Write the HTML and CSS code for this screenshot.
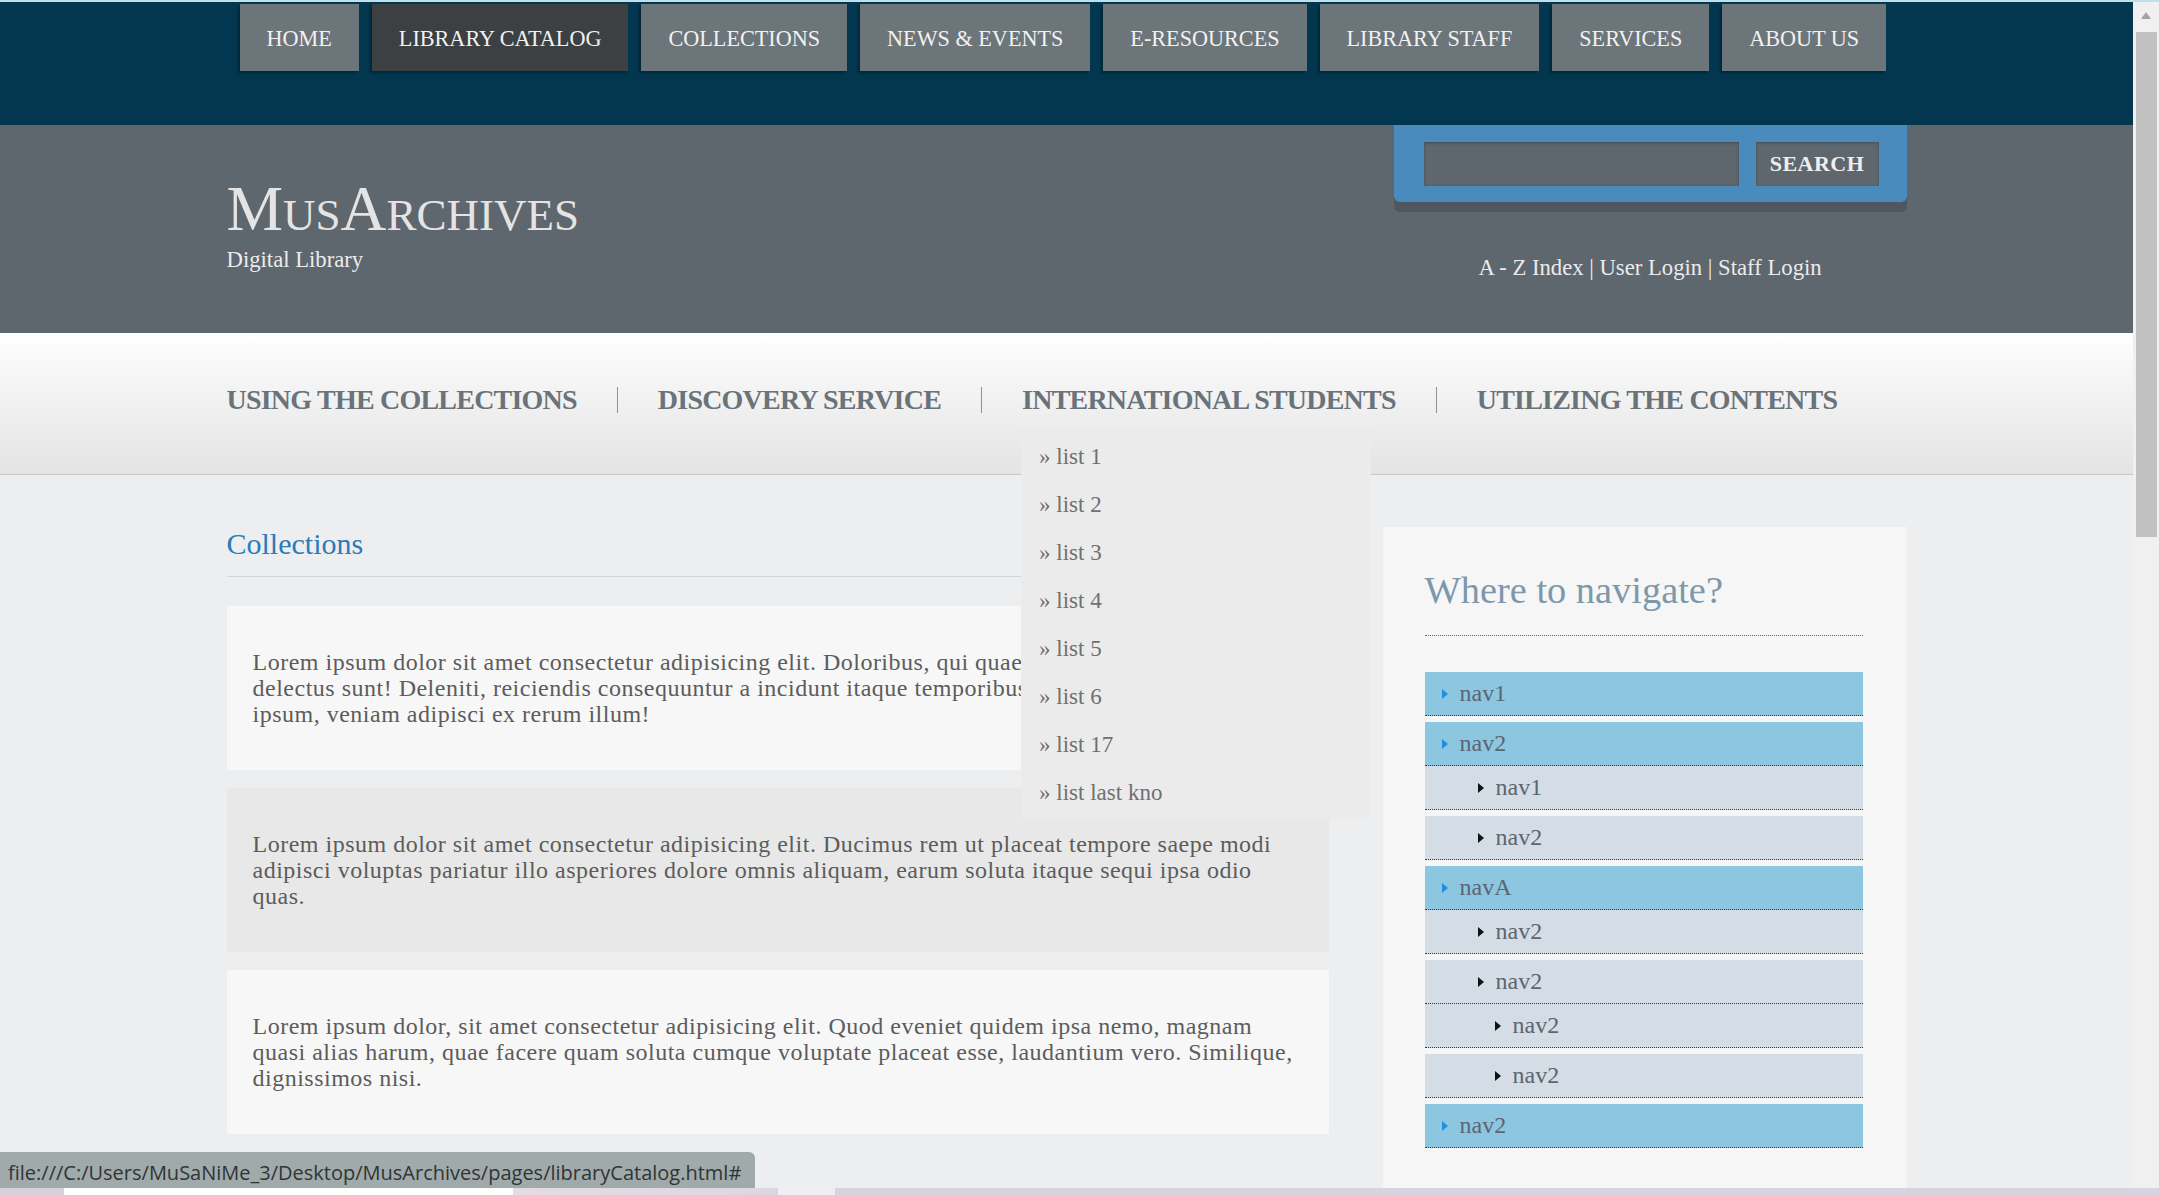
FILE: index.html
```html
<!DOCTYPE html>
<html lang="en">
<head>
<meta charset="utf-8">
<title>MusArchives - Library Catalog</title>
<link rel="stylesheet" href="styles.css">
</head>
<body>
<header class="topbar">
  <nav class="wrap mainnav">
    <a href="#" class="mn">HOME</a>
    <a href="#" class="mn active">LIBRARY CATALOG</a>
    <a href="#" class="mn">COLLECTIONS</a>
    <a href="#" class="mn">NEWS &amp; EVENTS</a>
    <a href="#" class="mn">E-RESOURCES</a>
    <a href="#" class="mn">LIBRARY STAFF</a>
    <a href="#" class="mn">SERVICES</a>
    <a href="#" class="mn">ABOUT US</a>
  </nav>
</header>

<section class="masthead">
  <div class="wrap mast-inner">
    <div class="brand">
      <h1 class="brand-title">MusArchives</h1>
      <p class="brand-sub">Digital Library</p>
    </div>
    <div class="tools">
      <form class="search">
        <input class="search-input" type="text" aria-label="Search">
        <button class="search-btn" type="button">SEARCH</button>
      </form>
      <div class="quick">A - Z Index | User Login | Staff Login</div>
    </div>
  </div>
</section>

<nav class="subnav">
  <ul class="wrap sublist">
    <li class="sub-item">USING THE COLLECTIONS</li>
    <li class="sub-item">DISCOVERY SERVICE</li>
    <li class="sub-item">INTERNATIONAL STUDENTS
      <ul class="drop">
        <li class="drop-item">» list 1</li>
        <li class="drop-item">» list 2</li>
        <li class="drop-item">» list 3</li>
        <li class="drop-item">» list 4</li>
        <li class="drop-item">» list 5</li>
        <li class="drop-item">» list 6</li>
        <li class="drop-item">» list 17</li>
        <li class="drop-item">» list last kno</li>
      </ul>
    </li>
    <li class="sub-item">UTILIZING THE CONTENTS</li>
  </ul>
</nav>

<main class="wrap content">
  <section class="col-main">
    <h2 class="section-title">Collections</h2>
    <article class="card"><p>Lorem ipsum dolor sit amet consectetur adipisicing elit. Doloribus, qui quaerat nostrum odio nihil delectus sunt! Deleniti, reiciendis consequuntur a incidunt itaque temporibus, aut quod nam nobis ipsum, veniam adipisci ex rerum illum!</p></article>
    <article class="card alt"><p>Lorem ipsum dolor sit amet consectetur adipisicing elit. Ducimus rem ut placeat tempore saepe modi adipisci voluptas pariatur illo asperiores dolore omnis aliquam, earum soluta itaque sequi ipsa odio quas.</p></article>
    <article class="card"><p>Lorem ipsum dolor, sit amet consectetur adipisicing elit. Quod eveniet quidem ipsa nemo, magnam quasi alias harum, quae facere quam soluta cumque voluptate placeat esse, laudantium vero. Similique, dignissimos nisi.</p></article>
  </section>

  <aside class="sidebar">
    <h3 class="side-title">Where to navigate?</h3>
    <ul class="snav">
      <li><a href="#">nav1</a></li>
      <li><a href="#">nav2</a>
        <ul>
          <li><a href="#">nav1</a></li>
          <li><a href="#">nav2</a></li>
        </ul>
      </li>
      <li><a href="#">navA</a>
        <ul>
          <li><a href="#">nav2</a></li>
          <li><a href="#">nav2</a>
            <ul>
              <li><a href="#">nav2</a></li>
              <li><a href="#">nav2</a></li>
            </ul>
          </li>
        </ul>
      </li>
      <li><a href="#">nav2</a></li>
    </ul>
  </aside>
</main>

<div class="statusbar">file:///C:/Users/MuSaNiMe_3/Desktop/MusArchives/pages/libraryCatalog.html#</div>
<div class="vscroll"><div class="vscroll-up"></div><div class="vscroll-thumb"></div></div>
<div class="frame-top"></div>
<div class="taskbar"></div>
</body>
</html>
```

FILE: styles.css
```css
* { box-sizing: border-box; }
html { overflow: hidden; }
body {
  margin: 0;
  padding-right: 26px;
  min-height: 1195px;
  background: #eceef0;
  font-family: "Liberation Serif", "Times New Roman", serif;
  color: #5c5c5c;
}
.wrap { width: 1680px; margin: 0 auto; }

/* top navigation */
.topbar { background: #03364f; height: 125px; padding-top: 4px; }
.mainnav { display: flex; gap: 13px; padding-left: 13px; }
.mn {
  display: block;
  height: 67px;
  padding: 2px 27px 0;
  line-height: 65px;
  background: #6c757a;
  color: #f1f1f1;
  font-size: 22.2px;
  text-decoration: none;
  box-shadow: -2px 2px 2px rgba(0, 0, 0, 0.3);
}
.mn.active { background: #3c4043; }

/* masthead */
.masthead { background: #5e666e; height: 208px; }
.mast-inner { display: flex; justify-content: space-between; align-items: flex-start; }
.brand { padding-top: 52px; }
.brand-title {
  margin: 0;
  font-size: 63.6px;
  line-height: 63px;
  font-weight: normal;
  font-variant: small-caps;
  color: #e4e4e4;
}
.brand-sub { margin: 7px 0 0; font-size: 22.7px; line-height: 26px; color: #ececec; }
.tools { width: 513px; }
.search {
  display: flex;
  gap: 17px;
  margin: 0;
  padding: 17px 28px 16px 30px;
  background: #4a8bbd;
  border-radius: 0 0 6px 6px;
  box-shadow: 0 10px 0 #4f575e;
}
.search-input {
  width: 315px;
  height: 44px;
  border: 0;
  background: #5e666e;
  box-shadow: inset 0 1px 3px rgba(0, 0, 0, 0.3);
}
.search-btn {
  width: 123px;
  height: 44px;
  border: 0;
  padding: 0;
  background: #5e666e;
  color: #eeeeee;
  font-family: "Liberation Serif", serif;
  font-weight: bold;
  font-size: 22px;
  letter-spacing: 0.5px;
  box-shadow: inset 0 1px 3px rgba(0, 0, 0, 0.25);
}
.quick { margin-top: 53px; text-align: center; font-size: 22.7px; line-height: 26px; color: #ebebeb; }

/* secondary navigation */
.subnav {
  background: linear-gradient(#ffffff 0%, #f7f7f7 25%, #e4e4e4 100%);
  border-bottom: 1px solid #c6c8ca;
  padding: 54px 0 61px;
}
.sublist { display: flex; list-style: none; padding: 0; margin-top: 0; margin-bottom: 0; }
.sub-item {
  position: relative;
  padding: 0 40px;
  line-height: 26px;
  font-size: 28px;
  font-weight: bold;
  letter-spacing: -0.78px;
  color: #6a737a;
}
.sub-item:first-child { padding-left: 0; }
.sub-item + .sub-item { border-left: 1px solid #8b9197; }
.drop {
  position: absolute;
  top: 41px;
  left: 39px;
  width: 350px;
  margin: 0;
  padding: 5px 0 2px;
  list-style: none;
  background: #ebebeb;
  z-index: 5;
}
.drop-item {
  padding-left: 18px;
  line-height: 48px;
  font-size: 23px;
  font-weight: normal;
  letter-spacing: 0;
  color: #707070;
}

/* content */
.content { display: flex; gap: 54px; align-items: flex-start; }
.col-main { width: 1102px; padding-top: 51px; }
.section-title {
  margin: 0 0 29px;
  padding-bottom: 14px;
  border-bottom: 1px solid #d4d7da;
  font-size: 30px;
  line-height: 36px;
  font-weight: normal;
  color: #2b7bb9;
}
.card {
  margin-bottom: 18px;
  padding: 43px 26px;
  background: #f7f7f7;
  font-size: 24px;
  line-height: 26px;
  letter-spacing: 0.5px;
  color: #5c5c5c;
}
.card p { margin: 0; }
.card.alt { background: #e8e8e8; }

/* sidebar */
.sidebar {
  width: 524px;
  margin-top: 52px;
  padding: 41px 44px 60px 42px;
  background: #f6f6f6;
}
.side-title {
  margin: 0;
  padding-bottom: 23px;
  border-bottom: 1px dotted #666;
  font-size: 38.4px;
  line-height: 44px;
  font-weight: normal;
  color: #7e98ab;
}
.snav { list-style: none; margin: 36px 0 0; padding: 0; }
.snav ul { list-style: none; margin: 0; padding: 0; }
.snav li { margin-bottom: 6px; }
.snav a {
  display: flex;
  align-items: center;
  height: 44px;
  padding-left: 17px;
  border-bottom: 1px dotted #3a3a3a;
  background: #8cc6e0;
  color: #5b6670;
  font-size: 24px;
  text-decoration: none;
}
.snav a::before {
  content: "";
  width: 0;
  height: 0;
  border-left: 6px solid #1e8fe3;
  border-top: 5px solid transparent;
  border-bottom: 5px solid transparent;
  margin-right: 12px;
}
.snav ul a { background: #d4dde5; padding-left: 53px; }
.snav ul a::before { border-left-color: #111111; }
.snav ul ul a { padding-left: 70px; }

/* browser chrome overlays */
.statusbar {
  position: fixed;
  left: 0;
  top: 1152px;
  width: 755px;
  height: 36px;
  padding-left: 8px;
  background: #a0aaab;
  border-radius: 0 6px 0 0;
  font-family: "Open Sans", "Noto Sans", sans-serif;
  font-size: 20px;
  line-height: 42px;
  color: #2f3535;
  white-space: nowrap;
  overflow: hidden;
  z-index: 10;
}
.vscroll {
  position: fixed;
  top: 0;
  right: 0;
  bottom: 7px;
  width: 26px;
  background: #f0f0f0;
  z-index: 9;
}
.vscroll-up { height: 30px; display: flex; align-items: center; justify-content: center; }
.vscroll-up::before {
  content: "";
  border-bottom: 7px solid #a3a3a3;
  border-left: 5px solid transparent;
  border-right: 5px solid transparent;
}
.vscroll-thumb { margin: 2px 2px 0 3px; height: 505px; background: #c1c1c1; }
.frame-top { position: fixed; top: 0; left: 0; right: 0; height: 2px; background: #bfe0ea; z-index: 11; }
.taskbar {
  position: fixed;
  left: 0;
  right: 0;
  bottom: 0;
  height: 7px;
  background: linear-gradient(to right, #d6cfdc 0, #d6cfdc 64px, #fdfdfd 64px, #fdfdfd 513px, #e6dbe4 513px, #ddd6e2 778px, #f1eef3 778px, #f1eef3 835px, #d9d3e0 835px, #d9d3e0 100%);
  z-index: 11;
}
```
